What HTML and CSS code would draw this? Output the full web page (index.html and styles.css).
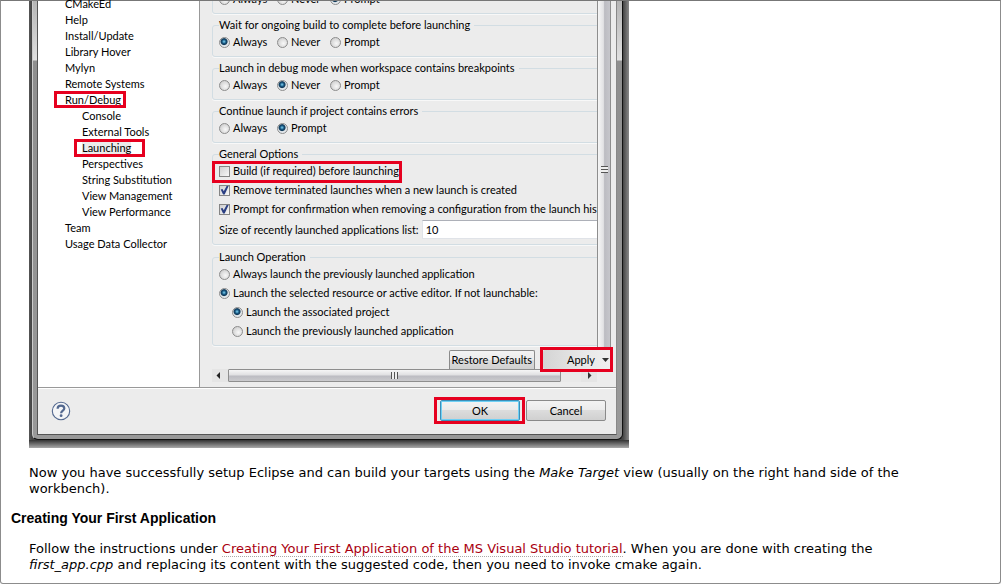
FILE: index.html
```html
<!DOCTYPE html>
<html lang="en">
<head>
<meta charset="utf-8">
<title>Creating Your First Application</title>
<link rel="stylesheet" href="styles.css">
</head>
<body>
<main class="page">
  <div class="shadow">
    <div class="frame">
      <div class="dialog">
        <div class="panes">
          <nav class="tree" aria-label="Preferences">
            <ul>
              <li>CMakeEd</li>
              <li>Help</li>
              <li>Install/Update</li>
              <li>Library Hover</li>
              <li>Mylyn</li>
              <li>Remote Systems</li>
              <li><span class="callout">Run/Debug</span>
                <ul>
                  <li>Console</li>
                  <li>External Tools</li>
                  <li><span class="callout selected">Launching</span></li>
                  <li>Perspectives</li>
                  <li>String Substitution</li>
                  <li>View Management</li>
                  <li>View Performance</li>
                </ul>
              </li>
              <li>Team</li>
              <li>Usage Data Collector</li>
            </ul>
          </nav>
          <section class="settings">
            <div class="scroller">
              <div class="viewport">
                <fieldset class="cut" aria-label="Launch option">
                  <div class="row">
                    <label class="first"><input type="radio" name="a">Always</label>
                    <label class="second"><input type="radio" name="a">Never</label>
                    <label><input type="radio" name="a" checked>Prompt</label>
                  </div>
                </fieldset>
                <fieldset>
                  <legend>Wait for ongoing build to complete before launching</legend>
                  <div class="row">
                    <label class="first"><input type="radio" name="b" checked>Always</label>
                    <label class="second"><input type="radio" name="b">Never</label>
                    <label><input type="radio" name="b">Prompt</label>
                  </div>
                </fieldset>
                <fieldset>
                  <legend>Launch in debug mode when workspace contains breakpoints</legend>
                  <div class="row">
                    <label class="first"><input type="radio" name="c">Always</label>
                    <label class="second"><input type="radio" name="c" checked>Never</label>
                    <label><input type="radio" name="c">Prompt</label>
                  </div>
                </fieldset>
                <fieldset>
                  <legend>Continue launch if project contains errors</legend>
                  <div class="row">
                    <label class="first"><input type="radio" name="d">Always</label>
                    <label><input type="radio" name="d" checked>Prompt</label>
                  </div>
                </fieldset>
                <fieldset>
                  <legend>General Options</legend>
                  <div class="row"><label class="callout"><input type="checkbox">Build (if required) before launching</label></div>
                  <div class="row"><label><input type="checkbox" checked>Remove terminated launches when a new launch is created</label></div>
                  <div class="row"><label><input type="checkbox" checked>Prompt for confirmation when removing a configuration from the launch history</label></div>
                  <div class="size-row"><label for="size">Size of recently launched applications list:</label><input id="size" type="text" value="10"></div>
                </fieldset>
                <fieldset class="operation">
                  <legend>Launch Operation</legend>
                  <div class="row"><label><input type="radio" name="e">Always launch the previously launched application</label></div>
                  <div class="row"><label><input type="radio" name="e" checked>Launch the selected resource or active editor. If not launchable:</label></div>
                  <div class="row nested"><label><input type="radio" name="f" checked>Launch the associated project</label></div>
                  <div class="row nested"><label><input type="radio" name="f">Launch the previously launched application</label></div>
                </fieldset>
              </div>
              <div class="vbar"><span class="grip"></span></div>
            </div>
            <div class="actions">
              <button class="restore" type="button">Restore Defaults</button>
              <button class="apply callout" type="button">Apply <svg width="7" height="4" viewBox="0 0 7 4"><path d="M0 0h7L3.500 4z" fill="#333"/></svg></button>
            </div>
            <div class="hbar">
              <svg width="16" height="13" viewBox="0 0 16 13"><path d="M8 3v7L4.500 6.500z" fill="#222"/></svg>
              <div class="thumb"><span class="grip"></span></div>
              <svg class="right" width="16" height="13" viewBox="0 0 16 13"><path d="M7 3v7l3.500-3.500z" fill="#333"/></svg>
            </div>
          </section>
        </div>
        <footer class="footer">
          <button class="help" type="button" aria-label="Help">
            <svg width="20" height="20" viewBox="0 0 20 20" fill="none" stroke="#53688f"><circle cx="10" cy="10" r="8.700" fill="#f4f5f7" stroke-width="1.100"/><path d="M6.600 7.700C6.700 5.700 8 4.700 10 4.700s3.300 1 3.300 2.700c0 2.200-3.200 2.300-3.200 4.900" stroke-width="2.200"/><circle cx="10.100" cy="14.700" r="1.400" fill="#53688f" stroke="none"/></svg>
          </button>
          <button class="ok callout" type="button">OK</button>
          <button class="cancel" type="button">Cancel</button>
        </footer>
      </div>
    </div>
  </div>
  <p>Now you have successfully setup Eclipse and can build your targets using the <em>Make Target</em> view (usually on the right hand side of the workbench).</p>
  <h2>Creating Your First Application</h2>
  <p>Follow the instructions under <a href="#tutorial">Creating Your First Application of the MS Visual Studio tutorial</a>. When you are done with creating the <em>first_app.cpp</em> and replacing its content with the suggested code, then you need to invoke cmake again.</p>
</main>
</body>
</html>
```
FILE: styles.css
```css
* { box-sizing: border-box; }
body { margin: 0; background: #fff; color: #000; }
.page {
  min-height: 100vh;
  border: 1px solid #8c8c8c;
  border-top-color: #777;
  border-radius: 0 0 3px 3px;
  padding: 0 48px 10px 28px;
  font: 13px/16px "DejaVu Sans", Verdana, sans-serif;
}
.page p { margin: 0; }
h2 {
  margin: 13px 0 15px -18px;
  font: bold 14px/16px "Liberation Sans", Arial, sans-serif;
}
a { color: #a90010; text-decoration: none; border-bottom: 1px dotted #aaa; }

/* window frame */
.shadow {
  max-width: 600px;
  margin-bottom: 17px;
  padding: 0 6px 8px 3px;
  background:
    linear-gradient(#333, #aaa) bottom / 100% 8px no-repeat,
    linear-gradient(90deg, #555, #444 3px, #444 calc(100% - 6px), #8a8a8a);
}
.frame {
  padding: 0 5px 4px 4px;
  border: 1px solid #111;
  border-left-color: #ccc;
  border-top: 0;
  border-radius: 0 0 6px 6px;
  background: linear-gradient(#b5b5b5, #e0e0e0 59px, #8f8f8f 60px, #999);
}
.dialog {
  border: 1px solid #555;
  border-top: 0;
  border-right-color: #888;
  background: #ececec;
  font: 11px/16px Lato, "Open Sans", sans-serif;
}
.panes { display: flex; border-bottom: 1px solid #999; }
.tree {
  flex: none;
  width: 162px;
  padding: 0 0 0 27px;
  background: #fff;
  border-right: 1px solid #999;
}
.tree ul { list-style: none; margin: 0; padding: 0; }
.tree > ul { margin-top: -5px; }
.tree ul ul { padding-left: 17px; }
.tree li { white-space: nowrap; }
.callout { position: relative; }
.callout::after {
  content: "";
  position: absolute;
  inset: -2px -5px -2px -11px;
  border: 3px solid #e6001f;
  pointer-events: none;
}
.selected { display: inline-block; background: #ebebeb; }
.selected::after { inset: -1px -14px -1px -8px; }

.settings { flex: 1; min-width: 0; padding: 0 5px 5px 12px; }
.scroller { display: flex; height: 347px; }
.viewport { flex: 1; min-width: 0; overflow: hidden; }
fieldset {
  width: calc(100% + 20px);
  min-width: 0;
  margin: 0 0 3px;
  padding: 0 0 5px 6px;
  border: 1px solid #d2dde3;
  border-radius: 3px;
  box-shadow: 0 1px #f8f8f8;
}
fieldset.cut { margin-top: -12px; }
fieldset.operation { margin-top: 4px; }
legend { padding: 0 4px 0 0; line-height: 16px; white-space: nowrap; }
.row { display: flex; height: 18px; align-items: center; white-space: nowrap; }
.row + .row { margin-top: 1px; }
.nested { padding-left: 13px; }
.row label { display: flex; align-items: center; gap: 3px; }
.first { width: 58px; }
.second { width: 53px; }
.row .callout::after { inset: -2px -3px -4px -7px; }
input { margin: 0; appearance: none; flex: none; }
input[type="radio"] {
  width: 11px;
  height: 11px;
  border: 1px solid #8c8c8c;
  border-radius: 50%;
  background: radial-gradient(circle at 60% 60%, #f8f8f8, #c4c4c4);
}
input[type="radio"]:checked {
  background: radial-gradient(circle at 45% 40%, #7fd5f5, #14527d 2px, #123a58 3px, #e3e8ec 4px);
}
input[type="checkbox"] {
  width: 11px;
  height: 11px;
  border: 1px solid #858585;
  background: linear-gradient(135deg, #d0d0d0, #f8f8f8);
}
input[type="checkbox"]:checked::before {
  content: "";
  display: block;
  width: 9px;
  height: 9px;
  background: #2b3f83;
  clip-path: polygon(8% 45%, 28% 40%, 42% 65%, 76% 0, 96% 6%, 52% 100%, 34% 100%);
}
.size-row { display: flex; align-items: center; gap: 3px; margin-top: 2px; height: 19px; white-space: nowrap; }
.size-row input {
  flex: 1;
  min-width: 0;
  height: 19px;
  padding: 0 3px;
  border: 1px solid #e0e3e8;
  border-top-color: #adb0b8;
  background: #fff;
  font: inherit;
}
.vbar {
  flex: none;
  display: flex;
  align-items: center;
  justify-content: center;
  width: 14px;
  padding-bottom: 10px;
  border: 1px solid #8e8e8e;
  border-top: 0;
  background: linear-gradient(90deg, #f6f6f6, #e2e2e4 45%, #bcbcc2 55%, #c6c6cb);
}
.grip { width: 7px; height: 7px; background: repeating-linear-gradient(#555 0 1px, #eee 1px 3px); }

.actions { display: flex; justify-content: flex-end; gap: 8px; padding: 2px 0 0; }
button {
  padding: 0;
  border: 1px solid #8a8a8a;
  border-radius: 2px;
  background: linear-gradient(#f3f3f3, #ebebeb 48%, #dcdcdc 50%, #d0d0d0);
  color: #000;
  font: inherit;
}
.restore { height: 19px; padding: 0 2px; border-bottom: 0; border-radius: 2px 2px 0 0; }
.apply {
  display: flex;
  align-items: center;
  justify-content: flex-end;
  gap: 7px;
  width: 68px;
  height: 19px;
  padding-right: 2px;
  border: 0;
  background: linear-gradient(90deg, #d4d4d4, #e8e8e8 60%, #f0f0f0);
}
.apply::after { inset: -3px -2px -3px -3px; }
.hbar { display: flex; height: 13px; margin-right: 14px; background: #e9e9e9; }
.hbar svg { flex: none; background: #e5e5e5; }
.thumb {
  flex: 1;
  display: flex;
  align-items: center;
  justify-content: center;
  margin-right: 20px;
  border: 1px solid #8e8e8e;
  border-radius: 1px;
  background: linear-gradient(#f6f6f6, #e0e0e2 45%, #bcbcc2 55%, #cbcbce);
}
.thumb .grip { background: repeating-linear-gradient(90deg, #555 0 1px, #eee 1px 3px); }

.footer {
  display: flex;
  align-items: center;
  gap: 6px;
  height: 46px;
  padding: 0 10px 2px 13px;
  border-top: 1px solid #fff;
}
.help { width: 20px; height: 20px; margin-right: auto; border: 0; background: none; }
.help svg { display: block; }
.ok, .cancel { width: 80px; height: 21px; }
.ok { border-color: #3c8fb8; box-shadow: inset 0 0 0 1px #6fd0f5; }
.ok::after { inset: -4px -6px -4px -7px; }
```
